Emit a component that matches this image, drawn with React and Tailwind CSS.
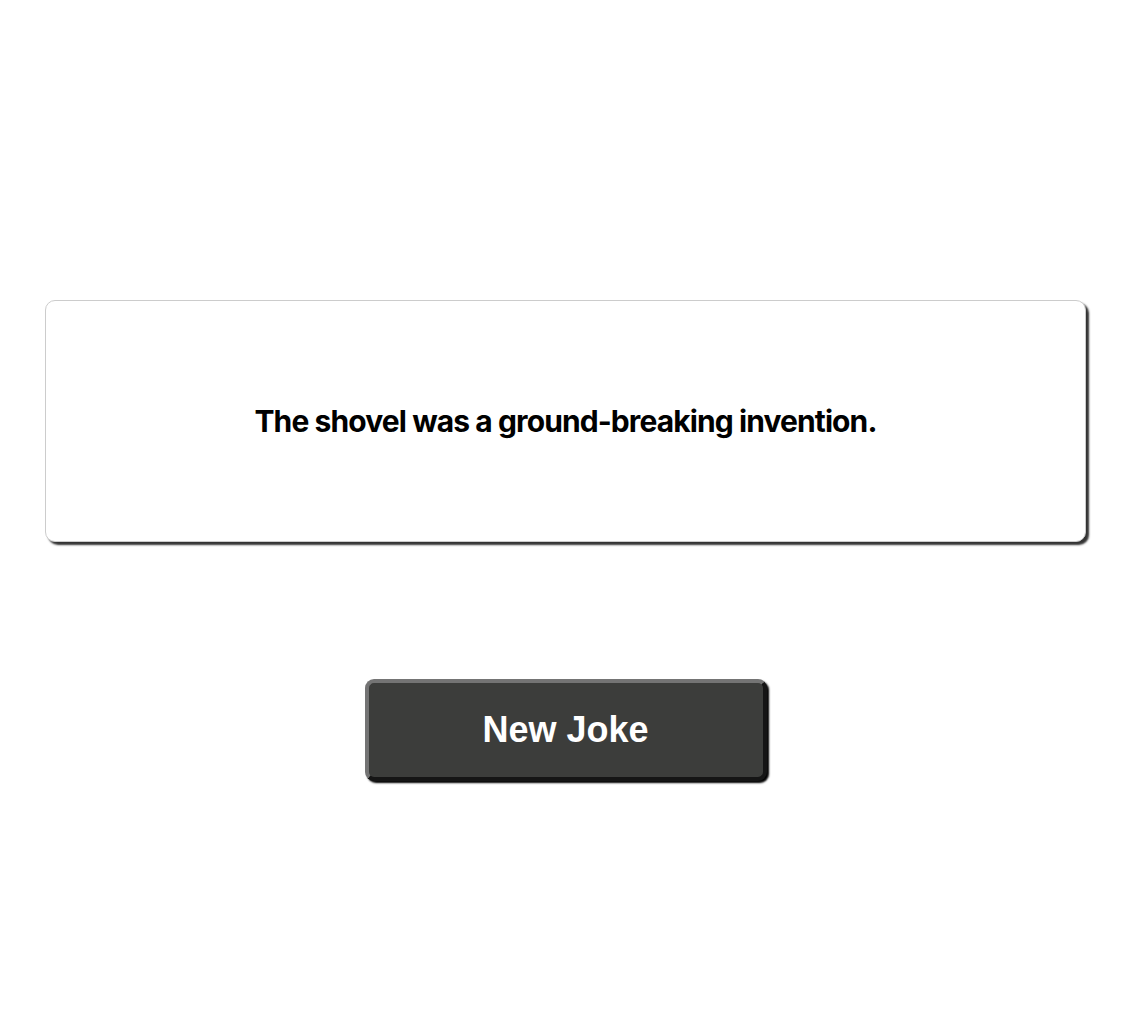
export default function App() {
  return (
    <div className="min-h-screen bg-white pt-[300px] pl-[45px] pr-[50px] font-['Inter',sans-serif]">
      <div className="h-[242px] flex items-center justify-center rounded-[10px] border border-[#cccccc] bg-white shadow-[3px_3px_2px_#333333]">
        <p className="text-[30px] font-bold tracking-[-0.9px] text-black">
          The shovel was a ground-breaking invention.
        </p>
      </div>
      <div className="flex justify-center mt-[137px]">
        <button className="w-[402px] h-[102px] rounded-[9px] border-[4px] border-t-[#747474] border-l-[#747474] border-b-[#151515] border-r-[#151515] bg-[#3c3d3b] shadow-[2px_2px_2px_#000000] text-white text-[36px] font-bold tracking-[0px] font-['Liberation_Sans',Arial,sans-serif]">
          New Joke
        </button>
      </div>
    </div>
  );
}
